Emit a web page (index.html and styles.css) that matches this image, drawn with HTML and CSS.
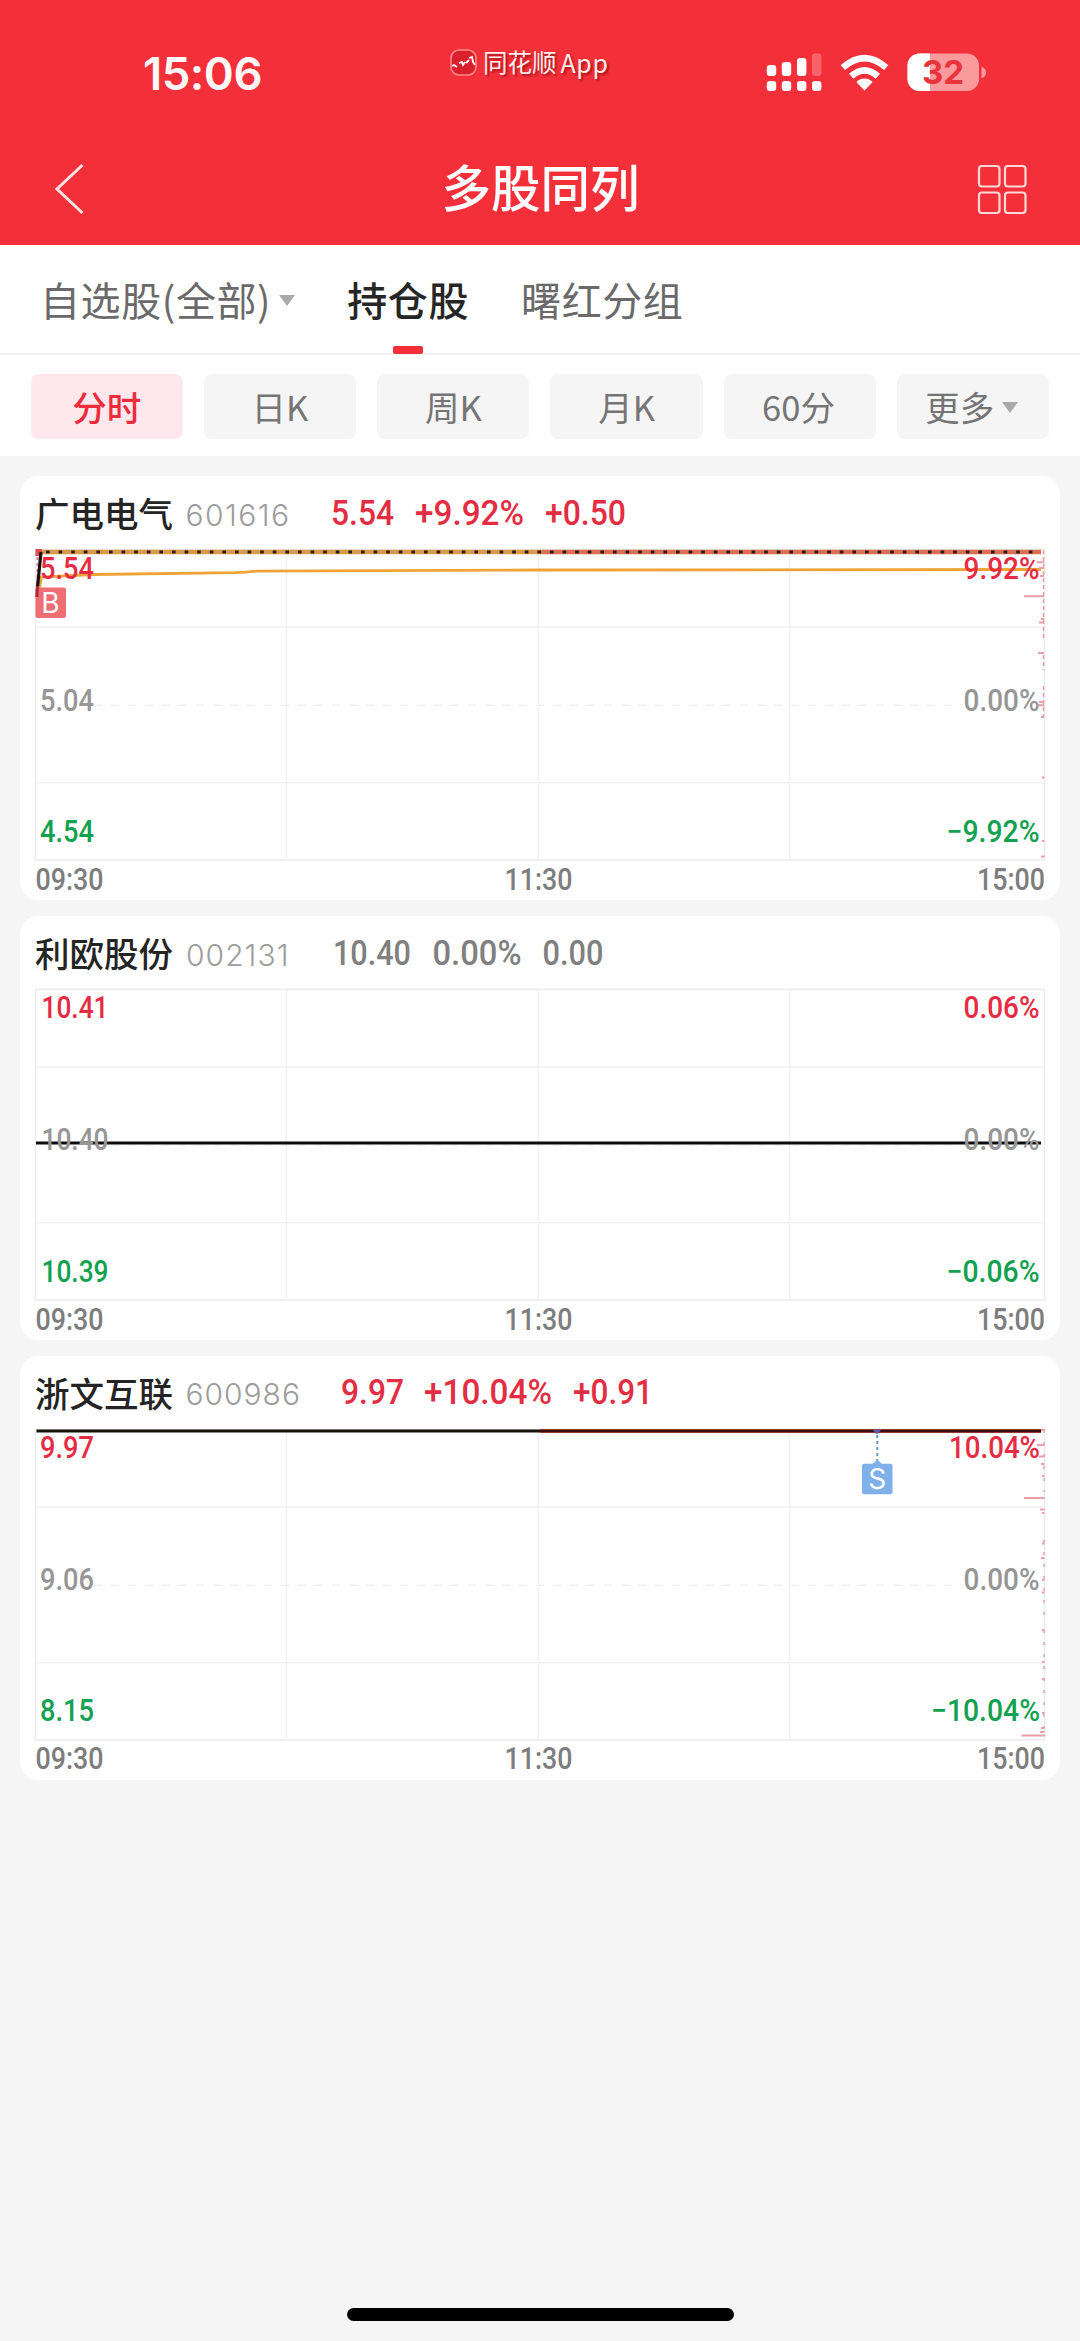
FILE: index.html
```html
<!DOCTYPE html>
<html lang="zh-CN">
<head>
<meta charset="utf-8">
<title>多股同列</title>
<link rel="stylesheet" href="styles.css">
</head>
<body>
<svg class="defs" width="0" height="0">
  <symbol id="grid" viewBox="20 540 1040 360">
    <path class="frame" d="M35.5 549.5H1044.5V860H35.5Z"/>
    <path class="rule" d="M36 627H1044M36 782.7H1044M286.5 550V860M538.3 550V860M789.7 550V860"/>
    <path class="rule dash" d="M94 705.3H960"/>
  </symbol>
</svg>
<header class="top">
  <div class="status">
    <span class="clock">15:06</span>
    <div class="brand">
      <svg width="27" height="27" viewBox="0 0 27 27"><rect x="1" y="1" width="25" height="25" rx="8" fill="#d9202c" stroke="#ff8a88" stroke-width="1.6"/><path d="M2 17l2-1 3 2M9 14l3-1 1 3 2-3M16 14l3-3M19 9l3-1 1 5 2 3" fill="none" stroke="#fff" stroke-width="1.8"/></svg>
      <span>同花顺</span><span class="app">App</span>
    </div>
    <svg class="sys" width="222" height="40" viewBox="766 52 222 40">
      <g fill="#fff">
        <rect x="766.8" y="65" width="9.4" height="11" rx="3"/><rect x="781.8" y="62" width="9.4" height="14" rx="3"/><rect x="797" y="58" width="9.4" height="18" rx="3"/><rect x="812" y="53.5" width="9.4" height="22.5" rx="3" opacity=".25"/>
        <rect x="766.8" y="81" width="9.4" height="10" rx="3"/><rect x="781.8" y="81" width="9.4" height="10" rx="3"/><rect x="797" y="81" width="9.4" height="10" rx="3"/><rect x="812" y="81" width="9.4" height="10" rx="3"/>
        <path d="M864.5 90.5L857 82.7Q856.2 81.7 857.3 80.9Q864.5 76.2 871.7 80.9Q872.8 81.7 872 82.7Z"/>
      </g>
      <g fill="none" stroke="#fff" stroke-width="6.5"><path d="M842.8 67.6Q864.5 48.5 886.2 67.6"/><path d="M851.2 76.3Q864.5 64.5 877.8 76.3"/></g>
      <rect x="907.5" y="53.5" width="71.5" height="37.5" rx="12" fill="#fb9a9c"/>
      <path d="M930 53.5V91H919.5a12 12 0 0 1-12-12V65.5a12 12 0 0 1 12-12Z" fill="#fff"/>
      <path d="M981.5 66.5q4.500 2 4.500 6t-4.500 6Z" fill="#fb9a9c"/>
      <text class="batt" x="922" y="84" textLength="42" lengthAdjust="spacingAndGlyphs">32</text>
    </svg>
  </div>
  <nav class="nav">
    <svg width="32" height="52" viewBox="0 0 32 52"><path d="M28.5 2L3 26L28.5 50" fill="none" stroke="#ffe3e2" stroke-width="3"/></svg>
    <h1>多股同列</h1>
    <svg width="50" height="50" viewBox="0 0 50 50"><g fill="none" stroke="#ffd9d8" stroke-width="2.2"><rect x="2" y="2" width="20.5" height="20.5" rx="3"/><rect x="28" y="2" width="20.5" height="20.5" rx="3"/><rect x="2" y="28.5" width="20.5" height="20.5" rx="3"/><rect x="28" y="28.5" width="20.5" height="20.5" rx="3"/></g></svg>
  </nav>
</header>

<div class="tabs">
  <div class="tab">自选股(全部)<i class="caret"></i></div>
  <div class="tab on">持仓股</div>
  <div class="tab">曙红分组</div>
</div>
<div class="chips">
  <div class="chip on">分时</div>
  <div class="chip">日K</div>
  <div class="chip">周K</div>
  <div class="chip">月K</div>
  <div class="chip wide">60分</div>
  <div class="chip wide">更多<i class="caret"></i></div>
</div>

<main class="list">
  <section class="card">
    <div class="head">
      <span class="name">广电电气</span>
      <svg class="quote up" width="520" height="64" viewBox="184 476 520 64">
        <text class="code" x="185.5" y="526" textLength="103.5">601616</text>
        <text x="331" y="525" textLength="63" lengthAdjust="spacingAndGlyphs">5.54</text>
        <text x="415" y="525" textLength="109" lengthAdjust="spacingAndGlyphs">+9.92%</text>
        <text x="545" y="525" textLength="81" lengthAdjust="spacingAndGlyphs">+0.50</text>
      </svg>
    </div>
    <svg class="chart" width="1040" height="360" viewBox="20 540 1040 360">
      <use href="#grid" x="20" y="540" width="1040" height="360"/>
      <path d="M36 552H540" stroke="#d99a4c" stroke-width="4.5"/>
      <path d="M540 552H1041" stroke="#db6f50" stroke-width="4.5"/>
      <path d="M46 552H1041" stroke="#2a1a1a" stroke-width="2.8" stroke-dasharray="3.6 9"/>
      <path d="M39 590L41.5 577L93 574.5L235 572.7Q245 572.3 256 571.2L540 570L1041 569.5" fill="none" stroke="#efa336" stroke-width="2.8"/>
      <rect x="35.5" y="549" width="6.5" height="7" fill="#e44b50"/>
      <path d="M37.5 557V588" stroke="#e8868a" stroke-width="2" stroke-dasharray="3 3"/>
      <rect x="35.5" y="587.5" width="30.5" height="30.5" rx="2" fill="#ee6e73"/>
      <path d="M41 552L37.5 587" stroke="#181014" stroke-width="3.2"/><path d="M37.5 586L36.8 597" stroke="#b52a31" stroke-width="3"/>
      <text class="mark" x="50.5" y="612.5">B</text>
      <path class="ticks vert" d="M1043.5 550V640M1043.5 655V670M1043.5 686V718"/>
      <path class="ticks" d="M1037 562.3H1044M1039 568H1044M1040 576H1044M1024 596.3H1044M1041 619H1044M1039 622.5H1044M1038 653H1044M1039 702H1044M1037 705.3H1044M1041 717H1044M1042 777.5H1044.5M1042 841H1044.5M1041 856.5H1044.5"/>
      <g class="lbl">
        <text class="r" x="40" y="578.5" textLength="54" lengthAdjust="spacingAndGlyphs">5.54</text>
        <text x="40" y="710.5" textLength="54" lengthAdjust="spacingAndGlyphs">5.04</text>
        <text class="g" x="40" y="842" textLength="54" lengthAdjust="spacingAndGlyphs">4.54</text>
        <text class="r" x="963.5" y="578.5" textLength="76" lengthAdjust="spacingAndGlyphs">9.92%</text>
        <text x="963.5" y="710.5" textLength="76" lengthAdjust="spacingAndGlyphs">0.00%</text>
        <text class="g" x="946.5" y="842" textLength="93" lengthAdjust="spacingAndGlyphs">−9.92%</text>
        <text class="t" x="35.5" y="890" textLength="68" lengthAdjust="spacingAndGlyphs">09:30</text>
        <text class="t" x="504.5" y="890" textLength="68" lengthAdjust="spacingAndGlyphs">11:30</text>
        <text class="t" x="977" y="890" textLength="68" lengthAdjust="spacingAndGlyphs">15:00</text>
      </g>
    </svg>
  </section>

  <section class="card">
    <div class="head">
      <span class="name">利欧股份</span>
      <svg class="quote flat" width="520" height="64" viewBox="184 476 520 64">
        <text class="code" x="186" y="525.5" textLength="102.5">002131</text>
        <text x="333" y="524.5" textLength="78" lengthAdjust="spacingAndGlyphs">10.40</text>
        <text x="432.5" y="524.5" textLength="89" lengthAdjust="spacingAndGlyphs">0.00%</text>
        <text x="542.5" y="524.5" textLength="61" lengthAdjust="spacingAndGlyphs">0.00</text>
      </svg>
    </div>
    <svg class="chart" width="1040" height="360" viewBox="20 540 1040 360">
      <use href="#grid" x="20" y="540" width="1040" height="360"/>
      <path d="M36 703H1041" stroke="#0c0c0c" stroke-width="3"/>
      <g class="lbl">
        <text class="r" x="41.5" y="578" textLength="67" lengthAdjust="spacingAndGlyphs">10.41</text>
        <text x="41.5" y="709.5" textLength="67" lengthAdjust="spacingAndGlyphs">10.40</text>
        <text class="g" x="41.5" y="841.5" textLength="67" lengthAdjust="spacingAndGlyphs">10.39</text>
        <text class="r" x="963.5" y="578" textLength="76" lengthAdjust="spacingAndGlyphs">0.06%</text>
        <text x="963.5" y="709.5" textLength="76" lengthAdjust="spacingAndGlyphs">0.00%</text>
        <text class="g" x="946.5" y="841.5" textLength="93" lengthAdjust="spacingAndGlyphs">−0.06%</text>
        <text class="t" x="35.5" y="889.5" textLength="68" lengthAdjust="spacingAndGlyphs">09:30</text>
        <text class="t" x="504.5" y="889.5" textLength="68" lengthAdjust="spacingAndGlyphs">11:30</text>
        <text class="t" x="977" y="889.5" textLength="68" lengthAdjust="spacingAndGlyphs">15:00</text>
      </g>
    </svg>
  </section>

  <section class="card">
    <div class="head">
      <span class="name">浙文互联</span>
      <svg class="quote up" width="520" height="64" viewBox="184 476 520 64">
        <text class="code" x="185.5" y="525" textLength="114.5">600986</text>
        <text x="341" y="524" textLength="63" lengthAdjust="spacingAndGlyphs">9.97</text>
        <text x="424" y="524" textLength="128" lengthAdjust="spacingAndGlyphs">+10.04%</text>
        <text x="573" y="524" textLength="80" lengthAdjust="spacingAndGlyphs">+0.91</text>
      </svg>
    </div>
    <svg class="chart" width="1040" height="360" viewBox="20 540 1040 360">
      <use href="#grid" x="20" y="540" width="1040" height="360"/>
      <path d="M540 551H1041" stroke="#b8443c" stroke-width="4.2"/>
      <path d="M36.5 551H540" stroke="#15130c" stroke-width="3.2"/>
      <path d="M540 551H1041" stroke="#35100f" stroke-width="2.4"/>
      <path d="M872.5 549.5H881.5L877 554.5Z" fill="#5d5cae"/>
      <path d="M877.3 555V581" stroke="#6597c4" stroke-width="2" stroke-dasharray="3 3"/>
      <path d="M871.5 585L877.3 579.5L883 585Z" fill="#7fb0ea"/>
      <rect x="862" y="583.8" width="30.5" height="30.5" rx="2" fill="#7fb0ea"/>
      <text class="mark" x="877.2" y="609">S</text>
      <path class="ticks vert sparse" d="M1044 550V612M1044 660V735M1044 750V855"/>
      <path class="ticks" d="M1041 550H1045M1037 565H1044.5M1039 576.5H1044.5M1041 584H1044.5M1042 596H1044.5M1024 618H1044.5M1040 629.5H1044.5M1042 633H1044.5M1042 663.5H1044.5M1041 678H1044.5M1042 700H1044.5M1042 712.5H1044.5M1042 750H1044.5M1042 782H1044.5M1042 799H1044.5M1042 833H1044.5M1041 848H1044.5M1040 852H1044.5M1021.5 855.5H1045"/>
      <g class="lbl">
        <text class="r" x="40" y="577.5" textLength="54" lengthAdjust="spacingAndGlyphs">9.97</text>
        <text x="40" y="709.5" textLength="54" lengthAdjust="spacingAndGlyphs">9.06</text>
        <text class="g" x="40" y="841" textLength="54" lengthAdjust="spacingAndGlyphs">8.15</text>
        <text class="r" x="949" y="577.5" textLength="91" lengthAdjust="spacingAndGlyphs">10.04%</text>
        <text x="963.5" y="709.5" textLength="76" lengthAdjust="spacingAndGlyphs">0.00%</text>
        <text class="g" x="931" y="841" textLength="109" lengthAdjust="spacingAndGlyphs">−10.04%</text>
        <text class="t" x="35.5" y="889" textLength="68" lengthAdjust="spacingAndGlyphs">09:30</text>
        <text class="t" x="504.5" y="889" textLength="68" lengthAdjust="spacingAndGlyphs">11:30</text>
        <text class="t" x="977" y="889" textLength="68" lengthAdjust="spacingAndGlyphs">15:00</text>
      </g>
    </svg>
  </section>
</main>
<footer class="home"><div class="bar"></div></footer>
</body>
</html>
```
FILE: styles.css
```css
* { box-sizing: border-box; }
body {
  margin: 0;
  width: 1080px;
  height: 2341px;
  display: flex;
  flex-direction: column;
  background: #f5f5f5;
  font-family: "Noto Sans CJK SC", sans-serif;
  overflow: hidden;
}
svg { display: block; flex: none; }
.defs { position: absolute; }

.top { height: 245px; background: #f32f39; color: #fff; flex: none; }
.status { height: 140px; padding: 0 92px 0 143px; display: flex; align-items: flex-start; }
.clock {
  width: 307px;
  padding-top: 46px;
  font: 600 45.5px/56px Inter, sans-serif;
  letter-spacing: -0.5px;
  color: #fff8f7;
}
.brand {
  width: 316px;
  padding-top: 44px;
  display: flex;
  align-items: center;
  font-size: 24.5px;
  line-height: 36px;
  color: #ffeceb;
  text-shadow: 2px 2px 2px rgba(110, 0, 0, .55);
}
.brand svg { margin-right: 6px; }
.brand .app { margin-left: 4px; font-size: 25px; letter-spacing: .6px; }
.sys { margin-top: 52px; }
.batt { font: 700 33px Inter, sans-serif; fill: #e8323c; }

.nav { height: 98px; padding: 0 53px 0 54px; display: flex; justify-content: space-between; align-items: center; }
.nav h1 { margin: 0 0 7px 18px; font-size: 49.5px; line-height: 70px; font-weight: 500; }

.tabs {
  height: 110px;
  padding-left: 40px;
  flex: none;
  display: flex;
  background: #fff;
  border-bottom: 2px solid #f1f1f1;
}
.tab {
  display: flex;
  align-items: center;
  margin-right: 52px;
  font-size: 40px;
  line-height: 108px;
  letter-spacing: .6px;
  color: #6a6a6a;
}
.tab.on { position: relative; color: #262626; font-weight: 500; }
.tab.on::after {
  content: "";
  position: absolute;
  left: 50%;
  bottom: -1px;
  width: 30px;
  height: 8px;
  margin-left: -15px;
  border-radius: 2px;
  background: #f32f39;
}
.caret { border: 8px solid transparent; border-top: 11px solid #a9a9a9; border-bottom: 0; margin: 3px 0 0 8px; }

.chips {
  height: 101px;
  flex: none;
  padding: 18.5px 30.5px 17px;
  display: grid;
  grid-template-columns: repeat(6, 1fr);
  column-gap: 21px;
  background: #fff;
}
.chip {
  display: flex;
  align-items: center;
  justify-content: center;
  border-radius: 8px;
  background: #f5f5f5;
  color: #757575;
  font-size: 34.5px;
  line-height: 64px;
}
.chip.wide { padding-right: 3px; }
.chip.on { background: #fee8eb; color: #ec2b3c; font-weight: 500; }

.list { padding: 20px 20px 0; display: flex; flex-direction: column; gap: 16px; flex: 1; }
.card { height: 424px; border-radius: 18px; background: #fff; overflow: hidden; }
.head { height: 64px; padding-left: 15px; display: flex; }
.name { width: 149px; font-size: 34.5px; font-weight: 500; line-height: 72px; color: #242424; white-space: nowrap; }
.quote { font: 500 35.5px Roboto, sans-serif; }
.quote.up { fill: #e32d42; }
.quote.flat { fill: #808080; }
.quote .code { font: 300 30px Inter, sans-serif; fill: #9c9c9c; }

.frame, .rule { fill: none; stroke: #ebebeb; stroke-width: 1.5; }
.rule { stroke: #f1f1f1; }
.rule.dash { stroke-dasharray: 8 9; }
.ticks { fill: none; stroke: #e9a0a6; stroke-width: 2; }
.ticks.vert { stroke-width: 1.5; stroke-dasharray: 4 3; }
.ticks.sparse { stroke-dasharray: 3 9; }
.lbl { font: 500 30.5px Roboto, sans-serif; fill: #969696; }
.lbl .r { fill: #e52c44; }
.lbl .g { fill: #12a150; }
.lbl .t { fill: #7d7d7d; }
.mark { font: 400 28px Inter, sans-serif; fill: #fff; text-anchor: middle; }

.home { padding-bottom: 20px; display: flex; justify-content: center; }
.bar { width: 387px; height: 13px; border-radius: 7px; background: #000; }
```
